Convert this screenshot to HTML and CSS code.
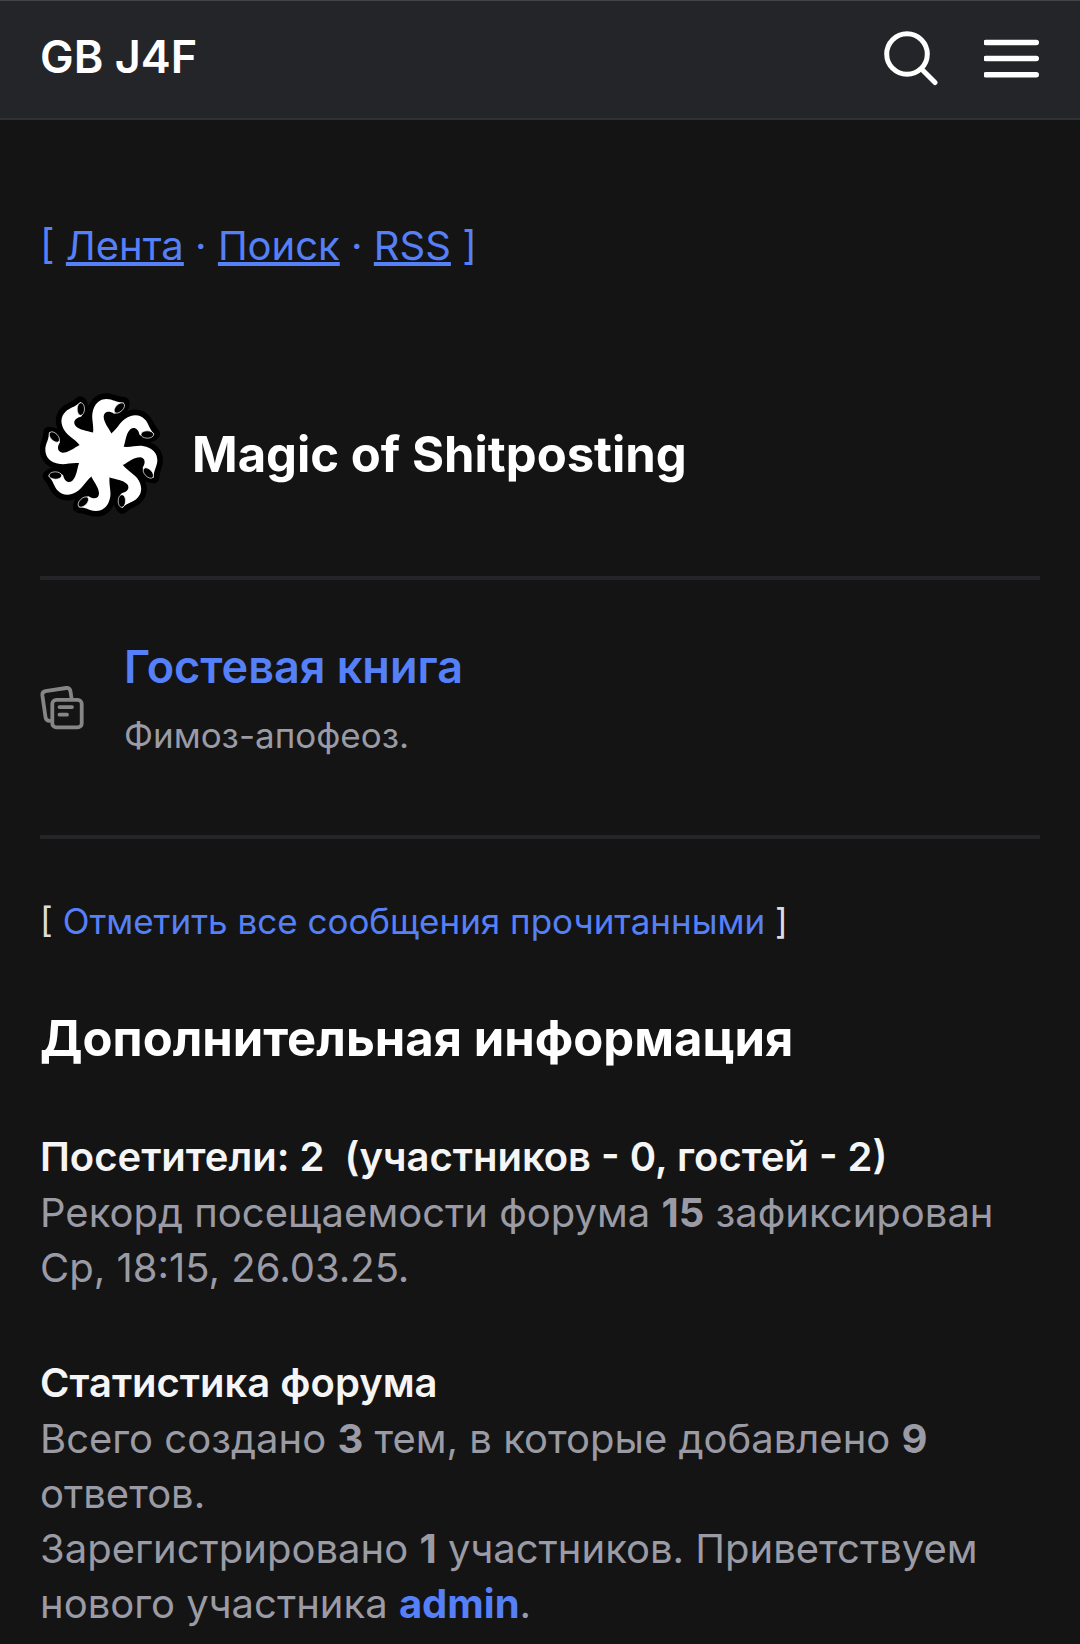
FILE: index.html
```
<!DOCTYPE html>
<html lang="ru">
<head>
    <meta charset="UTF-8">
    <meta name="viewport" content="width=device-width, initial-scale=1.0">
    <title>GB J4F</title>
    <link rel="stylesheet" href="styles.css">
</head>
<body>
    <header class="header">
        <a class="brand" href="#">GB J4F</a>
        <div class="header-actions">
            <button type="button" class="icon-button" aria-label="Поиск">
                <svg width="56" height="56" viewBox="0 0 56 56" fill="none" stroke="#fff" stroke-width="5" stroke-linecap="round">
                    <circle cx="23" cy="24" r="20.3"/>
                    <path d="M38 39.5 51 52.5"/>
                </svg>
            </button>
            <button type="button" class="icon-button" aria-label="Меню">
                <svg width="56" height="56" viewBox="0 0 56 56" stroke="#fff" stroke-width="5.4" stroke-linecap="round">
                    <path d="M1.7 12.5H52.3M1.7 28.5H52.3M1.7 44.7H52.3"/>
                </svg>
            </button>
        </div>
    </header>

    <main class="page">
        <nav class="top-nav">[ <a href="#">Лента</a> · <a href="#">Поиск</a> · <a href="#">RSS</a> ]</nav>

        <section class="category">
            <div class="category-head">
                <svg class="logo" viewBox="-184 -186 372 372">
                    <defs>
                        <path id="arm" d="M-32 -40C-16 -75 -30 -100 -27 -124C-22 -155 -5 -168 16 -168C34 -168 44 -157 68 -157C68 -142 56 -126 38 -124C22 -135 8 -130 7 -116C7 -98 20 -84 30 -65L10 0Z"/>
                        <g id="tip">
                            <ellipse cx="54" cy="-141" rx="19" ry="11" transform="rotate(-44 54 -141)"/>
                        </g>
                    </defs>
                    <!-- black outline -->
                    <g fill="#000" stroke="#000" stroke-width="34" stroke-linejoin="round">
                        <circle r="125"/>
                        <use href="#arm"/>
                        <use href="#arm" transform="rotate(45)"/>
                        <use href="#arm" transform="rotate(90)"/>
                        <use href="#arm" transform="rotate(135)"/>
                        <use href="#arm" transform="rotate(180)"/>
                        <use href="#arm" transform="rotate(225)"/>
                        <use href="#arm" transform="rotate(270)"/>
                        <use href="#arm" transform="rotate(315)"/>
                    </g>
                    <!-- arms -->
                    <g fill="#fff">
                        <circle r="64"/>
                        <use href="#arm"/>
                        <use href="#arm" transform="rotate(45)"/>
                        <use href="#arm" transform="rotate(90)"/>
                        <use href="#arm" transform="rotate(135)"/>
                        <use href="#arm" transform="rotate(180)"/>
                        <use href="#arm" transform="rotate(225)"/>
                        <use href="#arm" transform="rotate(270)"/>
                        <use href="#arm" transform="rotate(315)"/>
                    </g>
                    <g fill="#000" stroke="#fff" stroke-width="2">
                        <use href="#tip"/>
                        <use href="#tip" transform="rotate(45)"/>
                        <use href="#tip" transform="rotate(90)"/>
                        <use href="#tip" transform="rotate(135)"/>
                        <use href="#tip" transform="rotate(180)"/>
                        <use href="#tip" transform="rotate(225)"/>
                        <use href="#tip" transform="rotate(270)"/>
                        <use href="#tip" transform="rotate(315)"/>
                    </g>
                </svg>
                <h2>Magic of Shitposting</h2>
            </div>

            <div class="forum">
                <svg class="forum-icon" viewBox="0 0 44 44" fill="none" stroke="#868686" stroke-width="3.8" stroke-linecap="round" stroke-linejoin="round">
                    <rect x="12.3" y="13.8" width="29.4" height="27.6" rx="4"/>
                    <path d="M19.5 21.1H32M19.5 28.7H27"/>
                    <path d="M31.5 12 30.4 5Q29.6 1.6 26.2 2L5.4 5.2Q2 6 2.4 9.4L5.6 31.8Q6.4 35 10 34.8"/>
                </svg>
                <div class="forum-text">
                    <h3><a href="#">Гостевая книга</a></h3>
                    <p>Фимоз-апофеоз.</p>
                </div>
            </div>
        </section>

        <p class="mark-read">[ <a href="#">Отметить все сообщения прочитанными</a> ]</p>

        <section class="info">
            <h2>Дополнительная информация</h2>
            <div class="info-block">
                <h4>Посетители: 2 &nbsp;(участников - 0, гостей - 2)</h4>
                <p>Рекорд посещаемости форума <b>15</b> зафиксирован Ср, 18:15, 26.03.25.</p>
            </div>
            <div class="info-block">
                <h4>Статистика форума</h4>
                <p>Всего создано <b>3</b> тем, в которые добавлено <b>9</b> ответов.</p>
                <p>Зарегистрировано <b>1</b> участников. Приветствуем нового участника <a href="#"><b>admin</b></a>.</p>
            </div>
        </section>
    </main>
</body>
</html>
```

FILE: styles.css
```
* {
    box-sizing: border-box;
}

body {
    margin: 0;
    background-color: #141414;
    color: #9a9ba5;
    font-family: Inter, "Liberation Sans", sans-serif;
    font-size: 40px;
    line-height: 55px;
}

h2, h3, h4, p {
    margin: 0;
}

a {
    color: #5680f8;
    text-decoration: none;
}

.header {
    display: flex;
    align-items: center;
    justify-content: space-between;
    height: 120px;
    padding: 0 40px 4px;
    background-color: #242529;
    border-top: 1px solid #434549;
    border-bottom: 2px solid #303035;
}

.brand {
    padding-bottom: 2px;
    color: #fff;
    font-size: 45px;
    font-weight: 600;
}

.header-actions {
    display: flex;
    gap: 44px;
}

.icon-button {
    padding: 0;
    border: none;
    background: none;
    cursor: pointer;
}

.icon-button svg {
    display: block;
}

.page {
    padding: 98px 40px 0;
}

.top-nav {
    color: #5680f8;
}

.top-nav a {
    text-decoration: underline;
}

.category {
    margin-top: 120px;
    border-bottom: 4px solid #242529;
}

.category-head {
    display: flex;
    align-items: center;
    gap: 28px;
    padding-bottom: 59px;
    border-bottom: 4px solid #242529;
}

.logo {
    flex: none;
    width: 124px;
    height: 124px;
}

h2 {
    color: #fff;
    font-size: 49px;
    font-weight: 700;
    line-height: 60px;
}

.forum {
    display: flex;
    align-items: center;
    gap: 40px;
}

.forum-icon {
    flex: none;
    width: 44px;
    height: 44px;
}

.forum-text {
    padding: 57px 0 72px;
}

.forum-text h3 {
    font-size: 45px;
    font-weight: 600;
    line-height: 60px;
}

.forum-text p {
    margin-top: 11px;
    font-size: 35px;
}

.mark-read {
    margin-top: 55px;
    color: #dddddf;
    font-size: 35px;
}

.info {
    margin-top: 60px;
}

.info-block {
    margin-top: 60px;
}

.info-block h4 {
    color: #f5f5f5;
    font-size: 40px;
    font-weight: 600;
    line-height: 56px;
}
```
